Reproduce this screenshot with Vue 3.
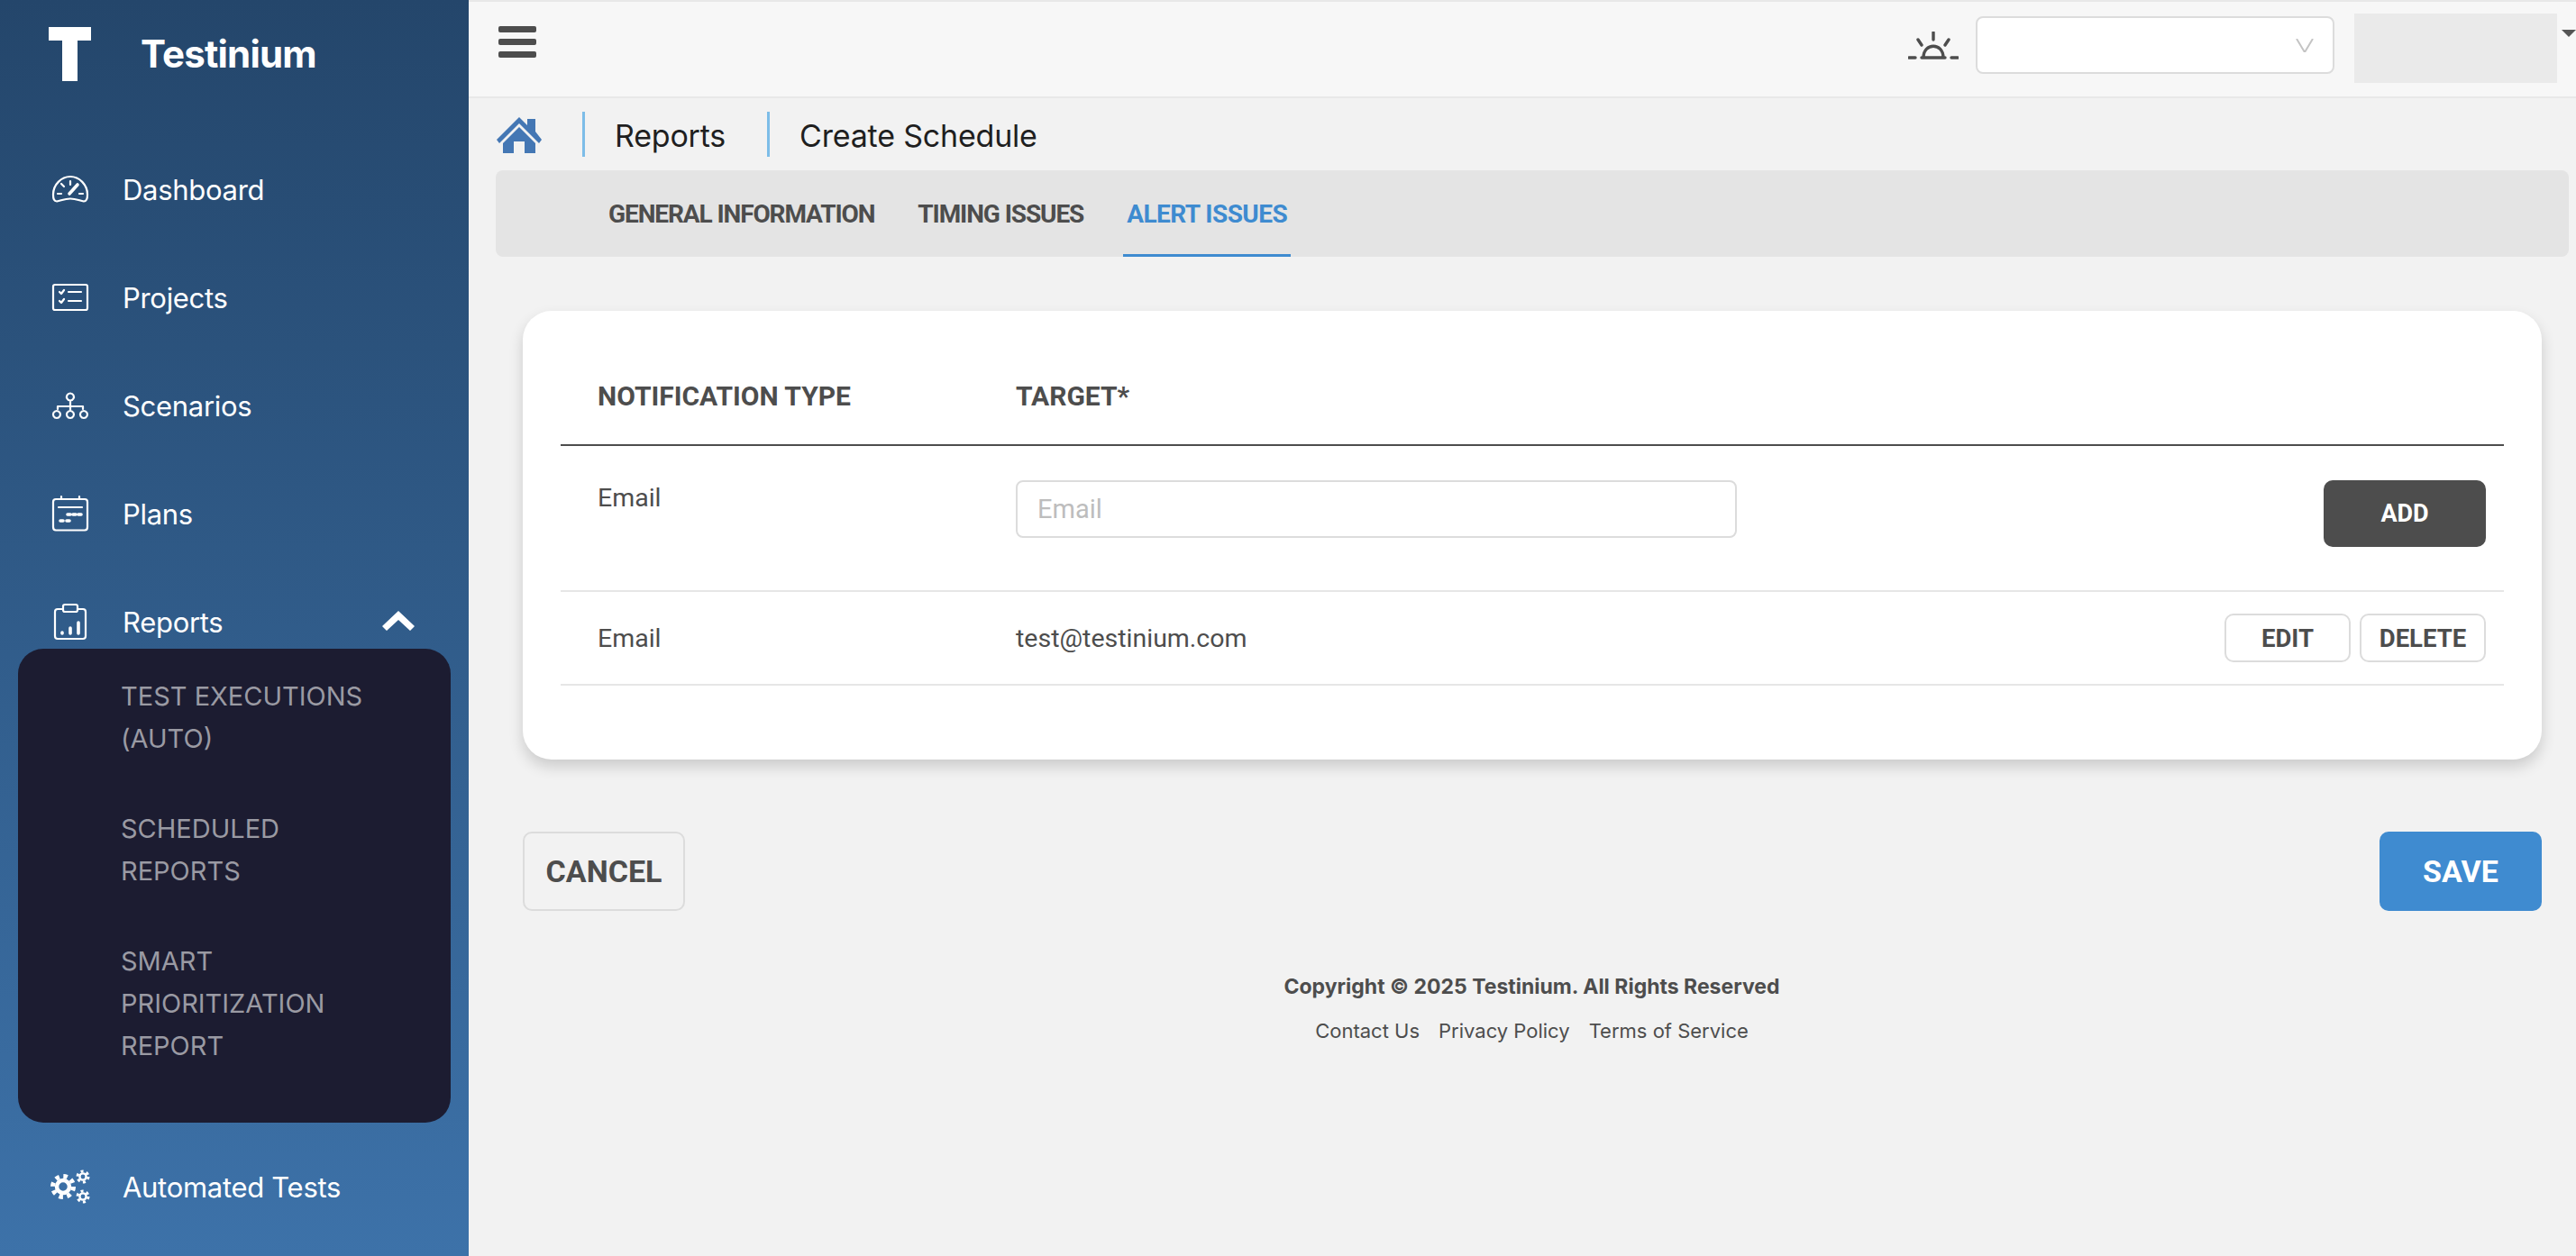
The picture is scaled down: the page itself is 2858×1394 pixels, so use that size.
<template>
  <div class="layout">
    <aside class="sidebar">
      <div class="brand">
        <div class="brand-mark"><span class="t-bar"></span><span class="t-stem"></span></div>
        <span class="brand-name">Testinium</span>
      </div>

      <nav class="nav">
        <div v-for="item in navItems" :key="item.label" class="nav-row">
          <div class="icon-box">
            <svg class="nav-icon" :width="item.w" :height="item.h" :viewBox="`0 0 ${item.w} ${item.h}`">
              <path
                v-for="(d, i) in item.paths"
                :key="i"
                :d="d"
                :class="{ thick: item.thick && i === item.paths.length - 1 }"
              />
            </svg>
          </div>
          <span class="nav-label">{{ item.label }}</span>
          <svg v-if="item.open" class="nav-chevron" viewBox="0 0 36 22">
            <path d="M0 17 L18 0 L36 17 L31 22 L18 10 L5 22 Z" />
          </svg>
        </div>

        <div class="submenu">
          <a v-for="sub in subItems" :key="sub" class="submenu-link">{{ sub }}</a>
        </div>

        <div class="nav-row nav-row-last">
          <div class="icon-box">
            <svg class="gears" width="44" height="40" viewBox="0 0 44 40">
              <circle cx="14" cy="20" r="7" class="gear-ring" />
              <circle cx="14" cy="20" r="11.5" class="gear-teeth" stroke-dasharray="4.5 4.53" />
              <circle cx="36" cy="9" r="3.6" class="gear-ring-sm" />
              <circle cx="36" cy="9" r="6" class="gear-teeth-sm" stroke-dasharray="3 3.28" />
              <circle cx="36" cy="31" r="3.6" class="gear-ring-sm" />
              <circle cx="36" cy="31" r="6" class="gear-teeth-sm" stroke-dasharray="3 3.28" />
            </svg>
          </div>
          <span class="nav-label">Automated Tests</span>
        </div>
      </nav>
    </aside>

    <div class="main">
      <header class="topbar">
        <div class="hamburger"><span></span><span></span><span></span></div>
        <div class="topbar-right">
          <svg class="alarm" viewBox="0 0 56 32">
            <path d="M28 1 V9 M11 9 L15 15 M45 9 L41 15 M1 29 H8 M48 29 H55 M15 29 H41 M17 29 C17 12 39 12 39 29" />
          </svg>
          <div class="project-select">
            <svg class="select-arrow" viewBox="0 0 20 15"><path d="M1 0 L10 15 L19 0" /></svg>
          </div>
          <div class="avatar"></div>
          <span class="caret"></span>
        </div>
      </header>

      <div class="breadcrumb">
        <svg class="home" viewBox="0 0 50 40">
          <path d="M25 0 L34 9 V2 H43 V16 L50 25 L47 29 L25 7 L3 29 L0 25 Z" />
          <path d="M25 11 L43 29 V40 H31 V27 H19 V40 H7 V29 Z" />
        </svg>
        <span class="crumb">Reports</span>
        <span class="crumb">Create Schedule</span>
      </div>

      <div class="tabs">
        <span v-for="tab in tabs" :key="tab" class="tab" :class="{ active: tab === 'ALERT ISSUES' }">{{ tab }}</span>
      </div>

      <section class="card">
        <div class="row row-head">
          <span>NOTIFICATION TYPE</span>
          <span>TARGET*</span>
        </div>
        <div class="row row-form">
          <span class="cell-type">Email</span>
          <input class="target-input" type="text" placeholder="Email" />
          <div class="row-actions"><button class="btn btn-add">ADD</button></div>
        </div>
        <div class="row row-item">
          <span>Email</span>
          <span>test@testinium.com</span>
          <div class="row-actions">
            <button class="btn btn-small">EDIT</button>
            <button class="btn btn-small">DELETE</button>
          </div>
        </div>
      </section>

      <div class="form-actions">
        <button class="btn btn-large btn-cancel">CANCEL</button>
        <button class="btn btn-large btn-save">SAVE</button>
      </div>

      <footer class="footer">
        <div class="copyright">Copyright © 2025 Testinium. All Rights Reserved</div>
        <div class="footer-links">
          <a>Contact Us</a>
          <a>Privacy Policy</a>
          <a>Terms of Service</a>
        </div>
      </footer>
    </div>
  </div>
</template>

<script setup>
const navItems = [
  {
    label: 'Dashboard',
    w: 40,
    h: 30,
    thick: true,
    paths: [
      'M5 28.5 C10 27.5 14 25.5 20 25.5 C26 25.5 30 27.5 35 28.5 C38 28.5 39 26 39 21 C39 10 30 1 20 1 C10 1 1 10 1 21 C1 26 2 28.5 5 28.5 Z',
      'M20 6 V10 M10 9 L13 12 M6 20 H10 M30 20 H34',
      'M19 20 L28 10'
    ]
  },
  {
    label: 'Projects',
    w: 40,
    h: 30,
    paths: [
      'M3 1 H37 Q39 1 39 3 V27 Q39 29 37 29 H3 Q1 29 1 27 V3 Q1 1 3 1 Z',
      'M8 9 L10 11 L13 7 M8 19 L10 21 L13 17',
      'M18 9 H32 M18 19 H32'
    ]
  },
  {
    label: 'Scenarios',
    w: 40,
    h: 30,
    paths: [
      'M20 1.5 A4 4 0 1 1 19.9 1.5 Z M20 9.5 V20',
      'M6 19 V16 H34 V19',
      'M5 21 A4 4 0 1 1 4.9 21 Z M20 21 A4 4 0 1 1 19.9 21 Z M35 21 A4 4 0 1 1 34.9 21 Z'
    ]
  },
  {
    label: 'Plans',
    w: 40,
    h: 40,
    thick: true,
    paths: [
      'M4 4 H36 Q39 4 39 7 V35 Q39 38.5 36 38.5 H4 Q1 38.5 1 35 V7 Q1 4 4 4 Z',
      'M10 1 V4 M30 1 V4 M7 13 H33',
      'M9 28 H12 M16 28 H19 M17 21 H20 M23 21 H26 M29 21 H32'
    ]
  },
  {
    label: 'Reports',
    w: 36,
    h: 40,
    open: true,
    thick: true,
    paths: [
      'M10 6 H4 Q1 6 1 9 V36 Q1 39 4 39 H32 Q35 39 35 36 V9 Q35 6 32 6 H26',
      'M12 1 H24 Q26 1 26 3 V7 Q26 9 24 9 H12 Q10 9 10 7 V3 Q10 1 12 1 Z',
      'M9 32 V33 M18 27 V33 M27 21 V33'
    ]
  }
]

const subItems = ['TEST EXECUTIONS (AUTO)', 'SCHEDULED REPORTS', 'SMART PRIORITIZATION REPORT']
const tabs = ['GENERAL INFORMATION', 'TIMING ISSUES', 'ALERT ISSUES']
</script>

<style>
html, body {
  margin: 0;
  height: 1394px;
  overflow: hidden;
  background: #f2f2f2;
}
</style>

<style scoped>
.layout {
  display: flex;
  width: 2858px;
  height: 1394px;
  font-family: Inter, "Liberation Sans", sans-serif;
  color: #4d4d4d;
}

/* Sidebar */
.sidebar {
  flex: 0 0 520px;
  background: linear-gradient(180deg, #24466b 0%, #3d72a9 100%);
  color: #fff;
}

.brand {
  height: 150px;
  display: flex;
  align-items: flex-start;
  box-sizing: border-box;
  padding: 30px 0 0 54px;
}

.brand-mark {
  width: 47px;
  height: 60px;
  display: flex;
  flex-direction: column;
  align-items: center;
}

.t-bar {
  width: 47px;
  height: 15px;
  background: #fff;
}

.t-stem {
  width: 17px;
  height: 45px;
  background: #fff;
}

.brand-name {
  margin: 0 0 0 55px;
  font-size: 42px;
  font-weight: 700;
  line-height: 60px;
  letter-spacing: -0.8px;
}

.nav-row {
  height: 120px;
  display: flex;
  align-items: center;
  padding-left: 58px;
  position: relative;
}

.nav-row-last {
  margin-top: 11px;
}

.icon-box {
  width: 40px;
  display: flex;
  justify-content: center;
  flex-shrink: 0;
}

.nav-icon {
  flex-shrink: 0;
  overflow: visible;
}

.nav-icon path {
  fill: none;
  stroke: #fff;
  stroke-width: 2.2;
  stroke-linecap: round;
  stroke-linejoin: round;
}

.nav-icon path.thick {
  stroke-width: 3.6;
}

.gears {
  flex-shrink: 0;
  fill: none;
  stroke: #fff;
}

.nav-label {
  margin-left: 38px;
  font-size: 31px;
  letter-spacing: -0.3px;
  color: #fff;
}

.nav-chevron {
  position: absolute;
  left: 424px;
  top: 48px;
  width: 36px;
  height: 22px;
  fill: #fff;
}

.submenu {
  margin: -30px 20px 0;
  height: 526px;
  box-sizing: border-box;
  padding: 29px 0 0 114px;
  background: #1c1c31;
  border-radius: 28px;
  position: relative;
  display: flex;
  flex-direction: column;
  gap: 53px;
}

.submenu-link {
  display: block;
  width: 310px;
  font-size: 29px;
  line-height: 47px;
  color: #9a9aa3;
}

.gear-ring { stroke-width: 4.5; }
.gear-ring-sm { stroke-width: 2.4; }
.gear-teeth { stroke-width: 5; }
.gear-teeth-sm { stroke-width: 3; }

/* Main */
.main {
  flex: 1;
  min-width: 0;
  background: #f2f2f2;
}

.topbar {
  height: 109px;
  box-sizing: border-box;
  border-top: 2px solid #e8e8e8;
  border-bottom: 2px solid #e8e8e8;
  background: #f7f7f7;
  display: flex;
  justify-content: space-between;
  position: relative;
}

.hamburger {
  margin: 27px 0 0 33px;
  width: 42px;
  display: flex;
  flex-direction: column;
  gap: 7px;
}

.hamburger span {
  height: 7px;
  border-radius: 2px;
  background: #4d4d4d;
}

.topbar-right {
  display: flex;
  align-items: flex-start;
}

.alarm {
  width: 56px;
  height: 32px;
  margin: 33px 19px 0 0;
  fill: none;
  stroke: #4d4d4d;
  stroke-width: 3.4;
  stroke-linecap: round;
}

.project-select {
  width: 398px;
  height: 64px;
  margin-top: 16px;
  box-sizing: border-box;
  border: 2px solid #dcdcdc;
  border-radius: 8px;
  background: #fff;
  position: relative;
}

.select-arrow {
  position: absolute;
  right: 21px;
  top: 23px;
  width: 20px;
  height: 15px;
  fill: none;
  stroke: #c4c4c4;
  stroke-width: 2;
}

.avatar {
  width: 225px;
  height: 77px;
  margin: 13px 0 0 22px;
  background: #eaeaea;
}

.caret {
  margin: 31px 0 0 5px;
  width: 0;
  height: 0;
  border-left: 8px solid transparent;
  border-right: 8px solid transparent;
  border-top: 8px solid #555;
}

.breadcrumb {
  height: 80px;
  padding-left: 31px;
  display: flex;
  align-items: center;
}

.home {
  width: 50px;
  height: 40px;
  flex-shrink: 0;
  fill: #4477b4;
  margin: 2px 45px 0 0;
}

.crumb {
  display: flex;
  align-items: center;
  box-sizing: border-box;
  height: 50px;
  padding: 3px 0 0 33px;
  margin-right: 46px;
  border-left: 3px solid #7dbde8;
  font-size: 34px;
  color: #1f1f1f;
  letter-spacing: -0.2px;
}

.tabs {
  height: 96px;
  margin: 0 8px 0 30px;
  padding-left: 125px;
  background: #e4e4e4;
  border-radius: 8px;
  display: flex;
  gap: 48px;
}

.tab {
  display: flex;
  align-items: center;
  box-sizing: border-box;
  height: 96px;
  padding: 0 4px;
  margin: 0 -4px;
  border-top: 3px solid transparent;
  border-bottom: 3px solid transparent;
  font-family: Roboto, "Liberation Sans", sans-serif;
  font-size: 28px;
  font-weight: 700;
  letter-spacing: -1.1px;
  color: #4d4d4d;
}

.tab.active {
  border-bottom-color: #3e8bd0;
  color: #3e8bd0;
  letter-spacing: -0.55px;
}

/* Card */
.card {
  margin: 60px 38px 0 60px;
  height: 498px;
  box-sizing: border-box;
  padding: 0 42px;
  background: #fff;
  border-radius: 32px;
  box-shadow: 0 8px 16px rgba(0, 0, 0, 0.16);
}

.row {
  display: grid;
  grid-template-columns: 464px 800px 1fr;
  padding: 0 20px 0 41px;
  box-sizing: border-box;
  font-family: Roboto, "Liberation Sans", sans-serif;
  font-size: 28.5px;
  color: #4d4d4d;
}

.row-head {
  height: 150px;
  align-items: center;
  padding-top: 40px;
  border-bottom: 2px solid #4d4d4d;
  font-size: 30px;
  font-weight: 700;
}

.row-form {
  height: 162px;
  padding-top: 38px;
  border-bottom: 2px solid #e6e6e6;
}

.cell-type {
  line-height: 40px;
}

.target-input {
  width: 800px;
  height: 64px;
  box-sizing: border-box;
  padding: 0 22px;
  border: 2px solid #dcdcdc;
  border-radius: 8px;
  font-family: inherit;
  font-size: 29px;
  outline: none;
}

.target-input::placeholder {
  color: #bdbdbd;
}

.row-item {
  height: 104px;
  align-items: center;
  border-bottom: 2px solid #e6e6e6;
}

.row-actions {
  display: flex;
  justify-content: flex-end;
  gap: 10px;
}

.btn {
  box-sizing: border-box;
  font-family: Roboto, "Liberation Sans", sans-serif;
  font-weight: 700;
  border-radius: 10px;
  cursor: pointer;
}

.btn-add {
  width: 180px;
  height: 74px;
  border: none;
  background: #4d4d4d;
  color: #fff;
  font-size: 27px;
}

.btn-small {
  width: 140px;
  height: 54px;
  border: 2px solid #dcdcdc;
  background: #fff;
  color: #4d4d4d;
  font-size: 27.5px;
}

.form-actions {
  margin: 80px 38px 0 60px;
  display: flex;
  justify-content: space-between;
}

.btn-large {
  width: 180px;
  height: 88px;
  font-size: 34px;
}

.btn-cancel {
  border: 2px solid #dcdcdc;
  background: #f2f2f2;
  color: #4d4d4d;
}

.btn-save {
  border: none;
  background: #3f8bd0;
  color: #fff;
}

.footer {
  margin: 68px 0 0 21px;
  text-align: center;
  font-size: 23px;
  color: #4d4d4d;
}

.copyright {
  font-weight: 700;
  line-height: 32px;
}

.footer-links {
  margin-top: 17px;
  display: flex;
  justify-content: center;
  gap: 21px;
  font-size: 22px;
  line-height: 32px;
}
</style>
